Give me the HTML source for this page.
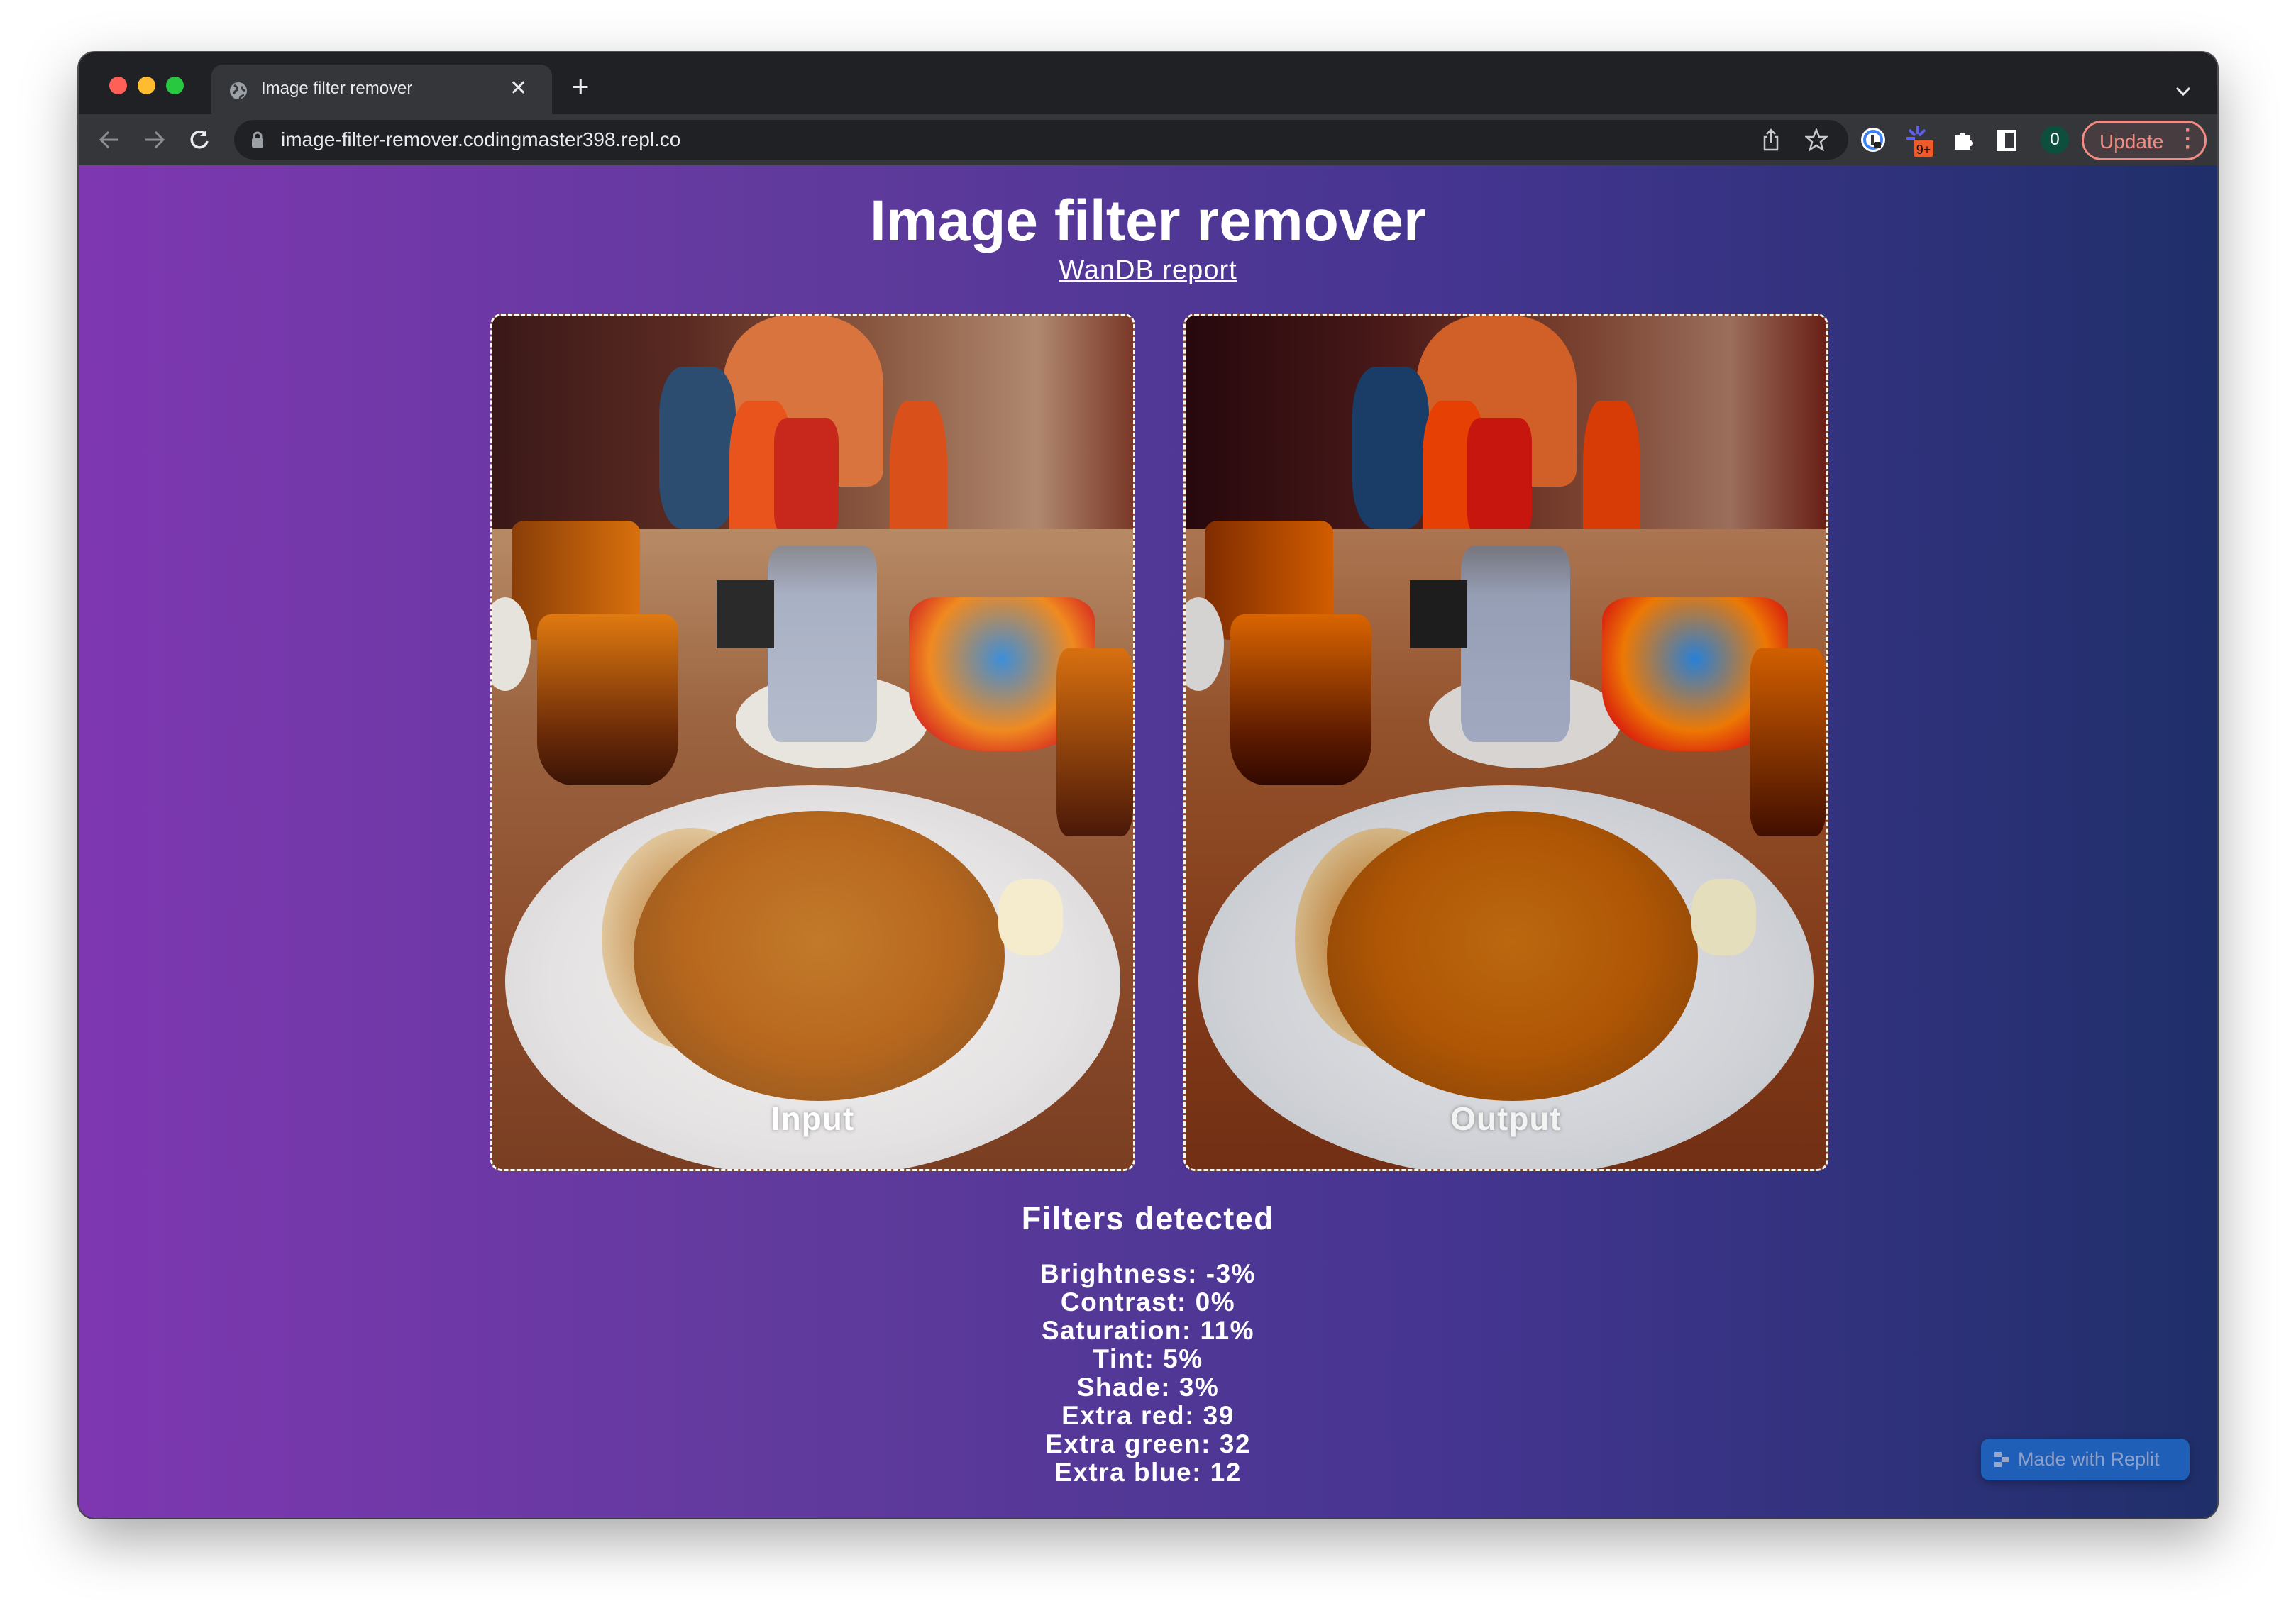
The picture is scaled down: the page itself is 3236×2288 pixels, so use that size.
<!DOCTYPE html>
<html><head><meta charset="utf-8"><style>
*{box-sizing:border-box;margin:0;padding:0}
html,body{width:3236px;height:2288px;background:#fff;overflow:hidden;font-family:"Liberation Sans",sans-serif}
.win{position:absolute;left:111px;top:74px;width:3014px;height:2066px;border-radius:22px;overflow:hidden;background:#202124;box-shadow:0 30px 80px rgba(0,0,0,.35),0 0 0 2px #55565a}
.tabbar{position:absolute;left:0;top:0;width:100%;height:87px;background:#202124}
.dot{position:absolute;top:34px;width:25px;height:25px;border-radius:50%}
.tab{position:absolute;left:187px;top:17px;width:480px;height:70px;background:#35363a;border-radius:16px 16px 0 0;color:#e8eaed;font-size:24px}
.toolbar{position:absolute;left:0;top:87px;width:100%;height:72px;background:#35363a}
.omni{position:absolute;left:219px;top:8px;width:2275px;height:56px;background:#202124;border-radius:28px;color:#e8eaed;font-size:28px}
.content{position:absolute;left:0;top:159px;width:100%;height:1907px;background:linear-gradient(90deg,#7e37b1 0%,#5f3a9c 35%,#443590 65%,#1f2f6a 100%)}
.ct{position:absolute;left:0;width:100%;text-align:center;color:#fff;font-weight:bold}
.box{position:absolute;top:209px;width:909px;height:1209px;border:3px dashed #fff;border-radius:16px;overflow:hidden;background:#8a5433}
.box div{position:absolute}
.lbl{left:0;width:100%;text-align:center;top:1105px;color:#fff;font-size:46px;font-weight:bold;letter-spacing:1px;text-shadow:0 0 6px rgba(0,0,0,.4)}
</style></head><body>
<div class="win">
 <div class="tabbar">
  <div class="dot" style="left:43px;background:#fe5f57"></div>
  <div class="dot" style="left:83px;background:#febc2e"></div>
  <div class="dot" style="left:123px;background:#28c840"></div>
  <div class="tab">
   <svg style="position:absolute;left:24px;top:23px" width="28" height="28" viewBox="0 0 28 28"><circle cx="14" cy="14" r="12" fill="#9aa0a6"/><path d="M8 6c3 2 5 3 4 6s-4 2-4 6M20 8c-2 3 1 5 3 6M16 26c0-4 3-5 6-6" stroke="#35363a" stroke-width="3" fill="none"/></svg>
   <span style="position:absolute;left:70px;top:20px">Image filter remover</span>
   <span style="position:absolute;left:420px;top:16px;font-size:30px">✕</span>
  </div>
  <span style="position:absolute;left:695px;top:28px;color:#e8eaed;font-size:42px;line-height:40px">+</span>
  <svg style="position:absolute;left:2955px;top:48px" width="22" height="14" viewBox="0 0 22 14"><path d="M2 2l9 9 9-9" stroke="#e8eaed" stroke-width="3" fill="none"/></svg>
 </div>
 <div class="toolbar">
  <svg style="position:absolute;left:28px;top:22px" width="30" height="28" viewBox="0 0 30 28"><path d="M28 14H4M14 3L3 14l11 11" stroke="#8a8d91" stroke-width="3" fill="none"/></svg>
  <svg style="position:absolute;left:92px;top:22px" width="30" height="28" viewBox="0 0 30 28"><path d="M2 14h24M16 3l11 11-11 11" stroke="#8a8d91" stroke-width="3" fill="none"/></svg>
  <svg style="position:absolute;left:156px;top:20px" width="30" height="32" viewBox="0 0 30 32"><path d="M25 18a11 11 0 1 1-3-10" stroke="#e8eaed" stroke-width="3.5" fill="none"/><path d="M24 2v9h-9z" fill="#e8eaed"/></svg>
  <div class="omni">
   <svg style="position:absolute;left:24px;top:16px" width="18" height="24" viewBox="0 0 18 24"><rect x="1" y="10" width="16" height="13" rx="2" fill="#9aa0a6"/><path d="M4 10V7a5 5 0 0 1 10 0v3" stroke="#9aa0a6" stroke-width="3" fill="none"/></svg>
   <span style="position:absolute;left:66px;top:12px">image-filter-remover.codingmaster398.repl.co</span>
   <svg style="position:absolute;left:2152px;top:12px" width="28" height="32" viewBox="0 0 28 32"><path d="M9 12H5v18h18V12h-4M14 2v18M8 8l6-6 6 6" stroke="#c8c9cc" stroke-width="2.5" fill="none"/></svg>
   <svg style="position:absolute;left:2214px;top:12px" width="32" height="32" viewBox="0 0 32 32"><path d="M16 2l4 10h10l-8 7 3 11-9-6-9 6 3-11-8-7h10z" stroke="#c8c9cc" stroke-width="2.5" fill="none"/></svg>
  </div>
  <svg style="position:absolute;left:2510px;top:17px" width="38" height="38" viewBox="0 0 38 38"><circle cx="19" cy="19" r="17" fill="#fff"/><circle cx="19" cy="19" r="12" fill="none" stroke="#3b82f6" stroke-width="4"/><rect x="16" y="12" width="4" height="14" fill="#333"/><rect x="20" y="22" width="10" height="9" rx="2" fill="#222"/></svg>
  <svg style="position:absolute;left:2572px;top:14px" width="44" height="48" viewBox="0 0 44 48"><g stroke="#6060f0" stroke-width="4"><path d="M20 2v12M8 8l8 8M30 8l-8 8M4 20h12"/></g><rect x="14" y="22" width="28" height="24" rx="3" fill="#f05a2a"/><text x="28" y="42" font-size="18" text-anchor="middle" fill="#111" font-family="Liberation Sans">9+</text></svg>
  <svg style="position:absolute;left:2640px;top:20px" width="32" height="32" viewBox="0 0 32 32"><path d="M4 10h7a4 4 0 1 1 8 0h7v7a4 4 0 1 1 0 8v5H4z" fill="#fff"/></svg>
  <div style="position:absolute;left:2703px;top:22px;width:28px;height:30px;border:4px solid #fff;border-left-width:12px"></div>
  <div style="position:absolute;left:2765px;top:16px;width:40px;height:40px;border-radius:50%;background:#0d4f3c;color:#fff;font-size:24px;text-align:center;line-height:40px">0</div>
  <div style="position:absolute;left:2823px;top:9px;width:176px;height:56px;border:3px solid #f28b82;border-radius:28px;background:#473d40;color:#f28b82;font-size:28px"><span style="position:absolute;left:22px;top:11px">Update</span><span style="position:absolute;left:142px;top:5px;font-size:30px;font-weight:bold;line-height:12px">·<br>·<br>·</span></div>
 </div>
 <div class="content">
  <div class="ct" style="top:32px;font-size:82px;letter-spacing:0px">Image filter remover</div>
  <div class="ct" style="top:127px;font-size:38px;font-weight:normal;text-decoration:underline;letter-spacing:1px">WanDB report</div>

  <div class="box" style="left:580px">
   <div style="left:0;top:0;width:100%;height:27%;background:linear-gradient(90deg,#3a1818,#5a2a22 30%,#8a5840 60%,#b08870 85%,#7a3828)"></div>
   <div style="left:36%;top:0;width:25%;height:20%;background:#d9743f;border-radius:40% 40% 10% 10%"></div>
   <div style="left:26%;top:6%;width:12%;height:19%;background:#2d4d70;border-radius:30%"></div>
   <div style="left:37%;top:10%;width:10%;height:22%;background:#e8541c;border-radius:30% 30% 10% 10%"></div>
   <div style="left:44%;top:12%;width:10%;height:14%;background:#c8281c;border-radius:20%"></div>
   <div style="left:62%;top:10%;width:9%;height:25%;background:#d9501a;border-radius:30% 30% 10% 10%"></div>
   <div style="left:0;top:25%;width:100%;height:75%;background:linear-gradient(180deg,#b78a66 0%,#9c6440 30%,#8a4a2a 70%,#7a3e22 100%)"></div>
   <div style="left:3%;top:24%;width:20%;height:14%;background:linear-gradient(90deg,#8a3e08,#d8700c);border-radius:10% 10% 20% 20%"></div>
   <div style="left:7%;top:35%;width:22%;height:20%;background:linear-gradient(180deg,#e07a10,#6a2a08 70%,#3a1406);border-radius:10% 10% 25% 25%"></div>
   <div style="left:38%;top:42%;width:30%;height:11%;background:#e8e4de;border-radius:50%"></div>
   <div style="left:43%;top:27%;width:17%;height:23%;background:linear-gradient(180deg,#8a8a90 0%,#a8b0c4 25%,#b4bccc);border-radius:12%"></div>
   <div style="left:35%;top:31%;width:9%;height:8%;background:#2a2a2a"></div>
   <div style="left:65%;top:33%;width:29%;height:18%;background:radial-gradient(ellipse at 50% 40%,#3e8ed8,#f08a20 55%,#d83020 80%);border-radius:15% 15% 40% 40%"></div>
   <div style="left:88%;top:39%;width:12%;height:22%;background:linear-gradient(180deg,#d87010,#4a1808);border-radius:15%"></div>
   <div style="left:-2%;top:33%;width:8%;height:11%;background:#e6e2dc;border-radius:50%"></div>
   <div style="left:2%;top:55%;width:96%;height:46%;background:radial-gradient(ellipse at 50% 50%,#f4f2f0 0%,#e4e2e2 60%,#cfcdd0 100%);border-radius:50%"></div>
   <div style="left:17%;top:60%;width:28%;height:26%;background:radial-gradient(ellipse,#b86c20,#e8d8b4 85%);border-radius:50%"></div>
   <div style="left:22%;top:58%;width:58%;height:34%;background:radial-gradient(ellipse at 50% 45%,#c27a2a 0%,#b8681e 50%,#9a5a20 80%,#e8dcc0 92%);border-radius:50%"></div>
   <div style="left:79%;top:66%;width:10%;height:9%;background:#f4eccc;border-radius:40%"></div>
   <div class="lbl">Input</div>
  </div>

  <div class="box" style="left:1557px;filter:saturate(1.15) brightness(0.93) contrast(1.05)">
   <div style="left:0;top:0;width:100%;height:27%;background:linear-gradient(90deg,#2a1014,#4a2020 30%,#7a4838 60%,#a07868 85%,#6a2820)"></div>
   <div style="left:36%;top:0;width:25%;height:20%;background:#d06c3a;border-radius:40% 40% 10% 10%"></div>
   <div style="left:26%;top:6%;width:12%;height:19%;background:#24446a;border-radius:30%"></div>
   <div style="left:37%;top:10%;width:10%;height:22%;background:#e04c18;border-radius:30% 30% 10% 10%"></div>
   <div style="left:44%;top:12%;width:10%;height:14%;background:#c0221a;border-radius:20%"></div>
   <div style="left:62%;top:10%;width:9%;height:25%;background:#d24818;border-radius:30% 30% 10% 10%"></div>
   <div style="left:0;top:25%;width:100%;height:75%;background:linear-gradient(180deg,#b08060 0%,#965c3a 30%,#844426 70%,#743820 100%)"></div>
   <div style="left:3%;top:24%;width:20%;height:14%;background:linear-gradient(90deg,#803606,#d0680a);border-radius:10% 10% 20% 20%"></div>
   <div style="left:7%;top:35%;width:22%;height:20%;background:linear-gradient(180deg,#d8700c,#602406 70%,#341004);border-radius:10% 10% 25% 25%"></div>
   <div style="left:38%;top:42%;width:30%;height:11%;background:#e2e0de;border-radius:50%"></div>
   <div style="left:43%;top:27%;width:17%;height:23%;background:linear-gradient(180deg,#808088 0%,#a0a8bc 25%,#acb4c8);border-radius:12%"></div>
   <div style="left:35%;top:31%;width:9%;height:8%;background:#242424"></div>
   <div style="left:65%;top:33%;width:29%;height:18%;background:radial-gradient(ellipse at 50% 40%,#3a88d4,#ec841c 55%,#d02a1c 80%);border-radius:15% 15% 40% 40%"></div>
   <div style="left:88%;top:39%;width:12%;height:22%;background:linear-gradient(180deg,#d06a0e,#441606);border-radius:15%"></div>
   <div style="left:-2%;top:33%;width:8%;height:11%;background:#e0dede;border-radius:50%"></div>
   <div style="left:2%;top:55%;width:96%;height:46%;background:radial-gradient(ellipse at 50% 50%,#eef0f2 0%,#dcdee2 60%,#c6c8d0 100%);border-radius:50%"></div>
   <div style="left:17%;top:60%;width:28%;height:26%;background:radial-gradient(ellipse,#b06418,#e4d4b0 85%);border-radius:50%"></div>
   <div style="left:22%;top:58%;width:58%;height:34%;background:radial-gradient(ellipse at 50% 45%,#bc7224 0%,#b06018 50%,#925218 80%,#e4d8bc 92%);border-radius:50%"></div>
   <div style="left:79%;top:66%;width:10%;height:9%;background:#f0eacc;border-radius:40%"></div>
   <div class="lbl">Output</div>
  </div>

  <div class="ct" style="top:1459px;font-size:45px;letter-spacing:1.5px">Filters detected</div>
  <div class="ct" style="top:1543px;font-size:37px;line-height:40px;letter-spacing:1.5px">Brightness: -3%<br>Contrast: 0%<br>Saturation: 11%<br>Tint: 5%<br>Shade: 3%<br>Extra red: 39<br>Extra green: 32<br>Extra blue: 12</div>

  <div style="position:absolute;left:2681px;top:1795px;width:294px;height:59px;border-radius:12px;background:#1f5fb8;box-shadow:0 4px 12px rgba(0,0,0,.3);color:#8fa0c8;font-size:27px">
   <svg style="position:absolute;left:19px;top:19px" width="22" height="22" viewBox="0 0 22 22"><rect x="0" y="0" width="10" height="7" fill="#9aa6c8"/><rect x="10" y="7" width="10" height="7" fill="#9aa6c8"/><rect x="0" y="14" width="10" height="7" fill="#9aa6c8"/></svg>
   <span style="position:absolute;left:52px;top:14px">Made with Replit</span>
  </div>
 </div>
</div>
</body></html>
